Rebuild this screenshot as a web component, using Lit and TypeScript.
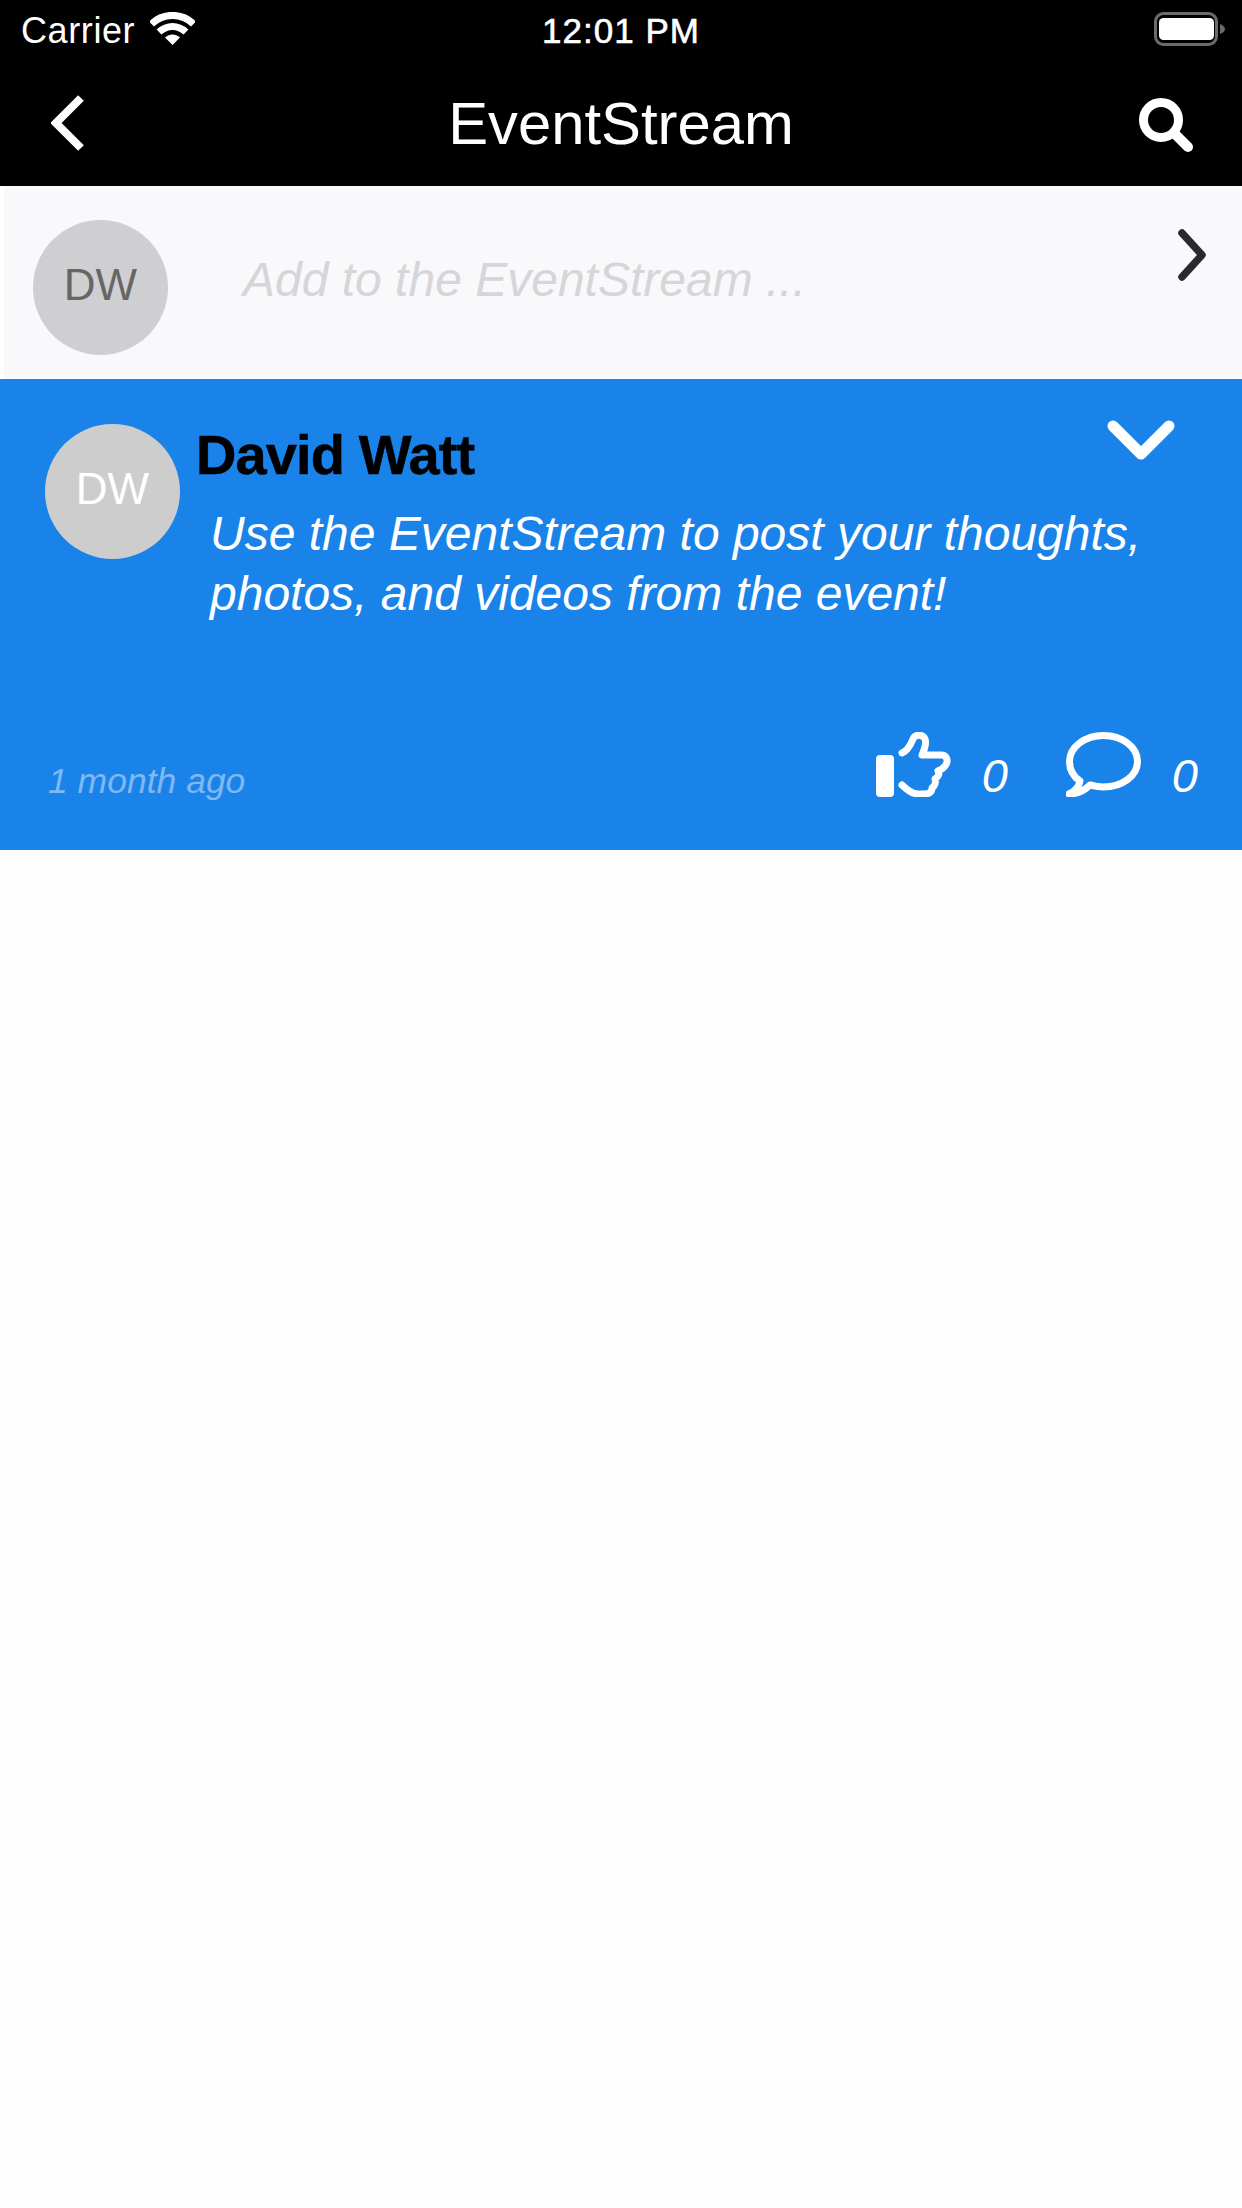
import { LitElement, css, html } from "lit";
import { customElement } from "lit/decorators.js";

const chevronBack = html`<svg class="nav-back" viewBox="0 0 33 56">
  <path d="M30 3 L5 28 L30 53" fill="none" stroke="#fff" stroke-width="8" />
</svg>`;

const searchIcon = html`<svg class="nav-search" viewBox="0 0 54 54">
  <circle cx="22" cy="22" r="17.5" fill="none" stroke="#fff" stroke-width="9" />
  <path d="M35 35 L49 49" fill="none" stroke="#fff" stroke-width="10" stroke-linecap="round" />
</svg>`;

const wifiIcon = html`<svg class="wifi" viewBox="0 0 45 33">
  <path d="M1.500 12 C13 0.500 32 0.500 43.500 12" fill="none" stroke="#fff" stroke-width="7" />
  <path d="M9 20 C17 12.500 28 12.500 36 20" fill="none" stroke="#fff" stroke-width="7" />
  <path d="M15 25.500 C19.500 21.500 25.500 21.500 30 25.500 L22.500 33 Z" fill="#fff" />
</svg>`;

const batteryIcon = html`<svg class="battery" viewBox="0 0 72 34">
  <rect x="1.5" y="1.5" width="61" height="31" rx="8" fill="none" stroke="#6b6b6d" stroke-width="3" />
  <rect x="5" y="6" width="55" height="22" rx="4.5" fill="#fff" />
  <path d="M66 12 C69 13 71 15 71 17 C71 19 69 21 66 22 Z" fill="#6b6b6d" />
</svg>`;

const chevronRight = html`<svg class="compose-arrow" viewBox="0 0 28 52">
  <path d="M4 4 L24 26 L4 48" fill="none" stroke="#2a2a2c" stroke-width="7.500" stroke-linecap="round" stroke-linejoin="round" />
</svg>`;

const chevronDown = html`<svg class="post-arrow" viewBox="0 0 68 40">
  <path d="M6 6 L34 34 L62 6" fill="none" stroke="#fff" stroke-width="11" stroke-linecap="round" stroke-linejoin="round" />
</svg>`;

const thumbIcon = html`<svg class="stat-icon" viewBox="0 0 75 65">
  <rect x="0" y="23" width="18" height="42" rx="4" fill="#fff" />
  <path
    d="M26 21 C31 19 35 12 37 7 C39 2 47 2 49 7 C51 12 48 18 46 23 L65 23 C71 23 73 29 69 34 C67 37 64 38 62 39 C64 42 62 45 59 47 C60 50 59 54 56 56 C56 60 53 62 49 62 L42 62 C36 62 31 58 26 53"
    fill="none"
    stroke="#fff"
    stroke-width="7"
    stroke-linecap="round"
    stroke-linejoin="round"
  />
</svg>`;

const commentIcon = html`<svg class="stat-icon" viewBox="0 0 75 65">
  <path
    d="M24 53 C28 54 33 55 37.5 55 C56 55 71.500 44 71.500 29.500 C71.500 15 56 3.500 37.500 3.500 C19 3.500 3.500 15 3.500 29.500 C3.500 38 8 45 14 49 C13 55 9 59 3 62 C11 62 19 58 24 53 Z"
    fill="none"
    stroke="#fff"
    stroke-width="7"
    stroke-linejoin="round"
  />
</svg>`;

@customElement("app-root")
export class AppRoot extends LitElement {
  static styles = css`
    :host {
      display: block;
      min-height: 2208px;
      background: #fefefe;
      font-family: "Liberation Sans", Arial, sans-serif;
    }

    .top {
      background: #000;
      color: #fff;
      height: 186px;
    }

    .status {
      height: 62px;
      display: grid;
      grid-template-columns: 1fr auto 1fr;
      align-items: center;
      padding: 0 16px 0 21px;
      font-size: 36px;
    }

    .status-left {
      display: flex;
      align-items: center;
      gap: 15px;
    }

    .status-left span {
      letter-spacing: 0.6px;
    }

    .time {
      font-size: 35px;
      letter-spacing: 1px;
      margin-right: 5px;
      -webkit-text-stroke: 0.6px #fff;
    }

    .status-right {
      display: flex;
      justify-content: flex-end;
    }

    .wifi {
      width: 45px;
      height: 33px;
      margin-top: -6px;
    }

    .battery {
      width: 72px;
      height: 34px;
      margin-top: -4px;
    }

    .nav {
      height: 124px;
      display: grid;
      grid-template-columns: 1fr auto 1fr;
      align-items: center;
      padding: 0 49px 0 51px;
    }

    .nav-back {
      display: block;
      width: 33px;
      height: 56px;
      margin-top: -2px;
    }

    .nav-search {
      display: block;
      width: 54px;
      height: 54px;
      margin-top: 2px;
      justify-self: end;
    }

    .title {
      font-size: 59.800px;
      line-height: 62px;
      margin-right: 2px;
    }

    .compose {
      height: 193px;
      box-sizing: border-box;
      background: #f9f8fb;
      border-left: 4px solid #fff;
      display: flex;
      padding: 34px 36px 0 29px;
    }

    .avatar {
      flex: none;
      width: 135px;
      height: 135px;
      box-sizing: border-box;
      padding-bottom: 5px;
      border-radius: 50%;
      background: #cfced0;
      display: flex;
      align-items: center;
      justify-content: center;
      font-size: 44px;
    }

    .compose .avatar {
      color: #666;
    }

    .compose-text {
      flex: 1;
      margin: 32px 0 0 75px;
      font-size: 48px;
      line-height: 56px;
      font-style: italic;
      color: #d6d5d8;
    }

    .compose-arrow {
      flex: none;
      width: 28px;
      height: 52px;
      margin-top: 9px;
    }

    .post {
      height: 471px;
      box-sizing: border-box;
      background: #1a83e9;
      color: #fff;
      display: flex;
      flex-direction: column;
      padding: 45px 44px 0 45px;
    }

    .post-main {
      display: flex;
      gap: 16px;
    }

    .post .avatar {
      color: #fff;
      background: #cdcdcd;
    }

    .post-body {
      flex: 1;
    }

    .post-head {
      display: flex;
      justify-content: space-between;
    }

    .name {
      font-size: 56px;
      line-height: 62px;
      font-weight: 700;
      letter-spacing: -0.9px;
      color: #000;
      -webkit-text-stroke: 0.5px #000;
    }

    .post-arrow {
      width: 68px;
      height: 40px;
      margin: -4px 23px 0 0;
    }

    .message {
      margin: 18px 0 0 14px;
      font-size: 48px;
      line-height: 60px;
      font-style: italic;
      white-space: nowrap;
    }

    .post-foot {
      margin-top: auto;
      height: 118px;
      display: flex;
      align-items: flex-start;
      justify-content: space-between;
      margin-left: 3px;
    }

    .ago {
      margin-top: 29px;
      font-size: 35.500px;
      line-height: 40px;
      font-style: italic;
      color: #7fb8f3;
    }

    .stats {
      display: flex;
    }

    .stat {
      display: flex;
      align-items: flex-start;
    }

    .stat + .stat {
      margin-left: 58px;
    }

    .stat-icon {
      width: 75px;
      height: 65px;
    }

    .count {
      margin: 17px 0 0 31px;
      font-size: 47px;
      line-height: 54px;
      font-style: italic;
    }
  `;

  render() {
    return html`
      <div class="top">
        <div class="status">
          <div class="status-left"><span>Carrier</span>${wifiIcon}</div>
          <div class="time">12:01 PM</div>
          <div class="status-right">${batteryIcon}</div>
        </div>
        <div class="nav">
          ${chevronBack}
          <div class="title">EventStream</div>
          ${searchIcon}
        </div>
      </div>

      <div class="compose">
        <div class="avatar">DW</div>
        <div class="compose-text">Add to the EventStream ...</div>
        ${chevronRight}
      </div>

      <div class="post">
        <div class="post-main">
          <div class="avatar">DW</div>
          <div class="post-body">
            <div class="post-head">
              <div class="name">David Watt</div>
              ${chevronDown}
            </div>
            <div class="message">
              Use the EventStream to post your thoughts,<br />photos, and videos from the event!
            </div>
          </div>
        </div>
        <div class="post-foot">
          <div class="ago">1 month ago</div>
          <div class="stats">
            <div class="stat">${thumbIcon}<span class="count">0</span></div>
            <div class="stat">${commentIcon}<span class="count">0</span></div>
          </div>
        </div>
      </div>
    `;
  }
}
